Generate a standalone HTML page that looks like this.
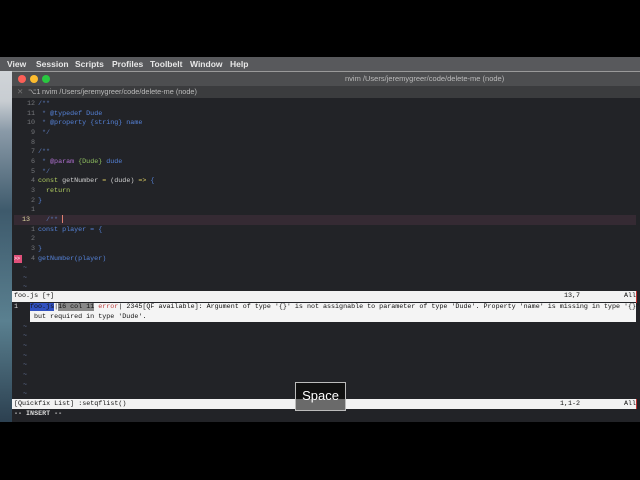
<!DOCTYPE html>
<html><head><meta charset="utf-8"><style>
*{margin:0;padding:0;box-sizing:border-box}
body{width:640px;height:480px;background:#000;position:relative;overflow:hidden;font-family:"Liberation Sans",sans-serif}
.abs{position:absolute}
#menu{left:0;top:57px;width:640px;height:14px;background:#58595c;color:#e8e8e8;font-size:8.5px;font-weight:bold;line-height:14px}
#menu span{position:absolute;top:0}
#desk{left:0;top:71px;width:12px;height:351px;background:linear-gradient(#d0d4d8 0,#c8cdd2 30px,#8a9aa8 60px,#3e5a6c 140px,#5a8090 250px,#2c4050 351px)}
#title{left:12px;top:71px;width:628px;height:15px;background:#4d4e50;border-top:1px solid #9a9a9a}
#tab{left:12px;top:86px;width:628px;height:12px;background:#3b3c3e;color:#bbb;font-size:7.3px;line-height:12px}
#code{left:12px;top:98px;width:628px;height:324px;background:#222327}
.r{position:absolute;left:0;width:640px;height:10px;font-family:"Liberation Mono",monospace;font-size:6.7px;line-height:10px;white-space:pre;color:#d0d0d0}
.n{position:absolute;left:14px;width:21px;text-align:right;color:#75777b}
.t{position:absolute;left:38px}
.c{color:#5a78b8}.b{color:#5582d8}.g{color:#8fc060}.k{color:#b0cc60}.p{color:#b070d0}.y{color:#d8c860}
.tl{position:absolute;left:23px;color:#6878a0}
</style></head><body>
<div id="menu" class="abs"><span style="left:7px">View</span><span style="left:36px">Session</span><span style="left:75px">Scripts</span><span style="left:112px">Profiles</span><span style="left:150px">Toolbelt</span><span style="left:190px">Window</span><span style="left:230px">Help</span></div>
<div id="desk" class="abs"></div>
<div id="title" class="abs">
<div class="abs" style="left:6px;top:3px;width:8px;height:8px;border-radius:50%;background:#fc5f57"></div>
<div class="abs" style="left:18px;top:3px;width:8px;height:8px;border-radius:50%;background:#fdbc2e"></div>
<div class="abs" style="left:30px;top:3px;width:8px;height:8px;border-radius:50%;background:#29c840"></div>
<div class="abs" style="left:333px;top:1px;color:#bbb;font-size:7.5px;line-height:12px">nvim /Users/jeremygreer/code/delete-me (node)</div>
</div>
<div id="tab" class="abs"><span class="abs" style="left:5px;color:#777">✕</span><span class="abs" style="left:16px">⌥1</span><span class="abs" style="left:30px">nvim /Users/jeremygreer/code/delete-me (node)</span></div>
<div id="code" class="abs"></div>

<div class="r" style="top:99px"><span class="n">12</span><span class="t c">/**</span></div>
<div class="r" style="top:109px"><span class="n">11</span><span class="t c"> * <span class="b">@typedef Dude</span></span></div>
<div class="r" style="top:118px"><span class="n">10</span><span class="t c"> * <span class="b">@property {string} name</span></span></div>
<div class="r" style="top:128px"><span class="n">9</span><span class="t c"> */</span></div>
<div class="r" style="top:138px"><span class="n">8</span></div>
<div class="r" style="top:147px"><span class="n">7</span><span class="t c">/**</span></div>
<div class="r" style="top:157px"><span class="n">6</span><span class="t c"> * <span class="p">@param</span> <span class="g">{Dude}</span> <span class="b">dude</span></span></div>
<div class="r" style="top:167px"><span class="n">5</span><span class="t c"> */</span></div>
<div class="r" style="top:176px"><span class="n">4</span><span class="t"><span class="k">const</span> getNumber <span class="y">=</span> (dude) <span class="y">=&gt;</span> <span class="b">{</span></span></div>
<div class="r" style="top:186px"><span class="n">3</span><span class="t k">  return</span></div>
<div class="r" style="top:196px"><span class="n">2</span><span class="t b">}</span></div>
<div class="r" style="top:205px"><span class="n">1</span></div>
<div class="r" style="top:215px;left:14px;width:622px;background:#352a33"><span style="position:absolute;left:8px;color:#e0d8a0">13</span><span class="c" style="position:absolute;left:24px">  /** <span style="display:inline-block;width:1px;height:8px;background:#e08070;vertical-align:middle"></span></span></div>
<div class="r" style="top:225px"><span class="n">1</span><span class="t b">const player = {</span></div>
<div class="r" style="top:234px"><span class="n">2</span></div>
<div class="r" style="top:244px"><span class="n">3</span><span class="t b">}</span></div>
<div class="r" style="top:254px"><span style="position:absolute;left:14px;top:1px;width:8px;height:8px;background:#e0507a;color:#fff;font-size:5px;line-height:8px">&gt;&gt;</span><span class="n">4</span><span class="t b">getNumber(player)</span></div>
<div class="r" style="top:263px"><span class="tl">~</span></div>
<div class="r" style="top:273px"><span class="tl">~</span></div>
<div class="r" style="top:282px"><span class="tl">~</span></div>
<div class="r" style="top:291px;left:12px;width:624px;height:11px;background:#f2f2f2;color:#111"><span style="position:absolute;left:2px">foo.js [+]</span><span style="position:absolute;left:552px">13,7</span><span style="position:absolute;left:612px">All</span></div>
<div class="abs" style="left:30px;top:303px;width:606px;height:19px;background:#f4f4f4"></div>
<div class="r" style="top:302px;color:#111"><span style="position:absolute;left:14px;color:#ddd">1</span><span style="position:absolute;left:30px"><span style="background:#3050c0;color:#111">foo.js</span>|<span style="background:#888">16 col 11</span> <span style="color:#c04040">error</span>| 2345[QF available]: Argument of type '{}' is not assignable to parameter of type 'Dude'. Property 'name' is missing in type '{}'</span></div>
<div class="r" style="top:312px;color:#111"><span style="position:absolute;left:34px">but required in type 'Dude'.</span></div>
<div class="r" style="top:322px"><span class="tl">~</span></div>
<div class="r" style="top:331px"><span class="tl">~</span></div>
<div class="r" style="top:341px"><span class="tl">~</span></div>
<div class="r" style="top:351px"><span class="tl">~</span></div>
<div class="r" style="top:360px"><span class="tl">~</span></div>
<div class="r" style="top:370px"><span class="tl">~</span></div>
<div class="r" style="top:380px"><span class="tl">~</span></div>
<div class="r" style="top:389px"><span class="tl">~</span></div>
<div class="r" style="top:399px;left:12px;width:624px;height:10px;background:#f2f2f2;color:#111"><span style="position:absolute;left:2px">[Quickfix List] :setqflist()</span><span style="position:absolute;left:548px">1,1-2</span><span style="position:absolute;left:612px">All</span></div>
<div class="r" style="top:409px;color:#ddd;font-weight:bold"><span style="position:absolute;left:14px">-- INSERT --</span></div>
<div class="abs" style="left:636px;top:291px;width:1px;height:12px;background:#c03030"></div>
<div class="abs" style="left:636px;top:399px;width:1px;height:10px;background:#c03030"></div>
<div class="abs" style="left:295px;top:382px;width:51px;height:29px;background:#111;border:1px solid #bbb"></div>
<div class="abs" style="left:296px;top:399px;width:49px;height:11px;background:#6a6a6a"></div>
<div class="abs" style="left:295px;top:386px;width:51px;text-align:center;color:#fff;font-size:13px;line-height:20px">Space</div>
</body></html>
